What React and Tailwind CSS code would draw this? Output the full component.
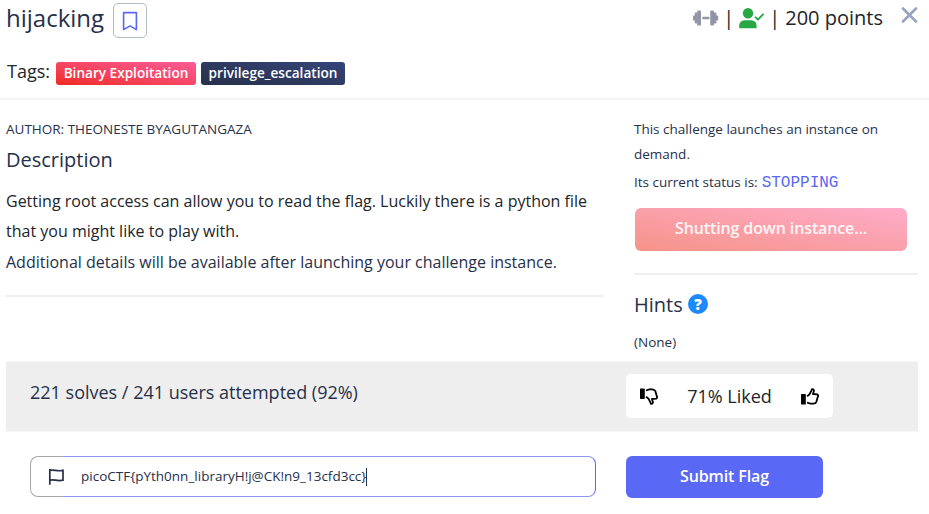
import React from "react";

const FONT = "font-['Open_Sans','Noto_Sans',sans-serif]";

function Dumbbell() {
  return (
    <svg width="26" height="16" viewBox="0 0 26 16" fill="#9295a5">
      <rect x="0" y="5.4" width="3" height="5.2" rx="0.8" />
      <rect x="1.8" y="2.4" width="3" height="11.2" rx="1" />
      <rect x="4.2" y="0.4" width="3.8" height="15.2" rx="1" />
      <rect x="9.4" y="6.7" width="7" height="2.6" rx="0.5" />
      <rect x="17.2" y="0.4" width="3.8" height="15.2" rx="1" />
      <rect x="20.4" y="2.4" width="3" height="11.2" rx="1" />
      <rect x="22.2" y="5.4" width="3" height="5.2" rx="0.8" />
    </svg>
  );
}

function UserCheck() {
  return (
    <svg width="26" height="21" viewBox="0 0 26 21">
      <g fill="#28a745">
        <circle cx="9" cy="5.2" r="5.2" />
        <path d="M0.2 20.2v-2.8a5.2 5.2 0 0 1 5.2-5.2h7a5.2 5.2 0 0 1 5.2 5.2v2.8z" />
      </g>
      <path d="M16 8.8l3 2.7 5.6-5.6" fill="none" stroke="#28a745" strokeWidth="1.8" />
    </svg>
  );
}

function Thumb({ className }) {
  return (
    <svg className={className} width="18" height="17" viewBox="0 0 18 17">
      <rect x="0" y="6" width="4.8" height="10.6" rx="0.7" fill="#000" />
      <path
        d="M6 8.4L8.6 6.2 10.4 2.6L11 1.1C12.8 1 13.2 2.4 12.7 3.6L11.9 6L16.2 6.3C17.2 7 17.3 8 16.8 8.8L15.4 13.8C14.8 15 13.8 15.6 12.4 15.7L9.4 15.6L6 14.5"
        fill="none"
        stroke="#000"
        strokeWidth="1.8"
        strokeLinejoin="round"
      />
    </svg>
  );
}

export default function App() {
  return (
    <div className={`${FONT} flex h-[514px] w-[929px] flex-col overflow-hidden bg-white text-[#27304a]`}>
      <header className="h-[100px] shrink-0 border-b-2 border-[#f3f3f3] px-1.5">
        <div className="flex h-[38px] items-start">
          <h1 className="w-[107px] text-[24px] leading-[36px] whitespace-nowrap">hijacking</h1>
          <button className="mt-[3px] flex h-[35px] w-[34px] items-center justify-center rounded-[5px] border border-[#b4bac1]">
            <svg width="16" height="20" viewBox="0 0 16 20" fill="none" stroke="#5a68f6" strokeWidth="1.6" strokeLinejoin="round">
              <path d="M1.6 1.6h12.8v17L8 14.9l-6.4 3.7z" />
            </svg>
          </button>
          <div className="ml-auto flex h-9 items-center text-[20px] text-[#212529]">
            <Dumbbell />
            <span className="ml-[4px]">|</span>
            <span className="ml-[5px]"><UserCheck /></span>
            <span className="ml-[4px]">|</span>
            <span className="ml-[5px] whitespace-nowrap">200 points</span>
          </div>
          <svg className="mt-[7px] mr-[5px] ml-[18px]" width="17" height="16" viewBox="0 0 17 16" stroke="#9aa3c0" strokeWidth="2.6" strokeLinecap="round">
            <path d="M2 1.5l13 13M15 1.5l-13 13" />
          </svg>
        </div>
        <div className="mt-[18px] flex items-center">
          <span className="w-[50px] pl-px text-[18px] leading-[30px] text-[#212529]">Tags:</span>
          <span className="mt-[4px] flex h-[23px] w-[140px] items-center justify-center rounded-[3px] bg-linear-to-tr from-[#ee281b] to-[#fc5a98] text-[13.6px] font-semibold whitespace-nowrap text-white">Binary Exploitation</span>
          <span className="mt-[4px] ml-[5px] flex h-[23px] w-[144px] items-center justify-center rounded-[3px] bg-linear-to-tr from-[#273049] to-[#35457a] text-[13.6px] font-semibold whitespace-nowrap text-white">privilege_escalation</span>
        </div>
      </header>

      <main className="flex h-[261px] shrink-0 pl-1.5">
        <section className="w-[598px]">
          <p className="mt-[19px] text-[13.5px] leading-5 whitespace-nowrap">AUTHOR: THEONESTE BYAGUTANGAZA</p>
          <h2 className="mt-[6px] text-[20px] leading-[30px]">Description</h2>
          <p className="mt-[11px] text-[16px] leading-[30px] whitespace-nowrap text-[#212529]">
            Getting root access can allow you to read the flag. Luckily there is a python file
            <br />
            that you might like to play with.
          </p>
          <p className="mt-px text-[16px] leading-[31px] whitespace-nowrap">Additional details will be available after launching your challenge instance.</p>
          <hr className="mt-[17px] border-t-2 border-[#efefef]" />
        </section>
        <aside className="ml-[30px] w-[284px]">
          <p className="mt-[17px] text-[13.5px] leading-[25px] whitespace-nowrap">
            This challenge launches an instance on
            <br />
            demand.
          </p>
          <p className="mt-[3px] flex h-[25px] items-center text-[13.5px] whitespace-nowrap">
            Its current status is:
            <code className="ml-[4px] font-['Liberation_Mono',monospace] text-[16px] text-[#5a68f6]">STOPPING</code>
          </p>
          <button className="mt-[13px] ml-[1px] block h-[43px] w-[272px] rounded-[6px] bg-linear-to-tr from-[#f69388] to-[#feacca] pb-[3px] text-[16px] font-semibold tracking-[-0.12px] text-white/90">Shutting down instance...</button>
          <hr className="mt-[22px] border-t-2 border-[#efefef]" />
          <div className="mt-[14px] flex h-[32px] items-center">
            <h2 className="w-[54px] text-[20px]">Hints</h2>
            <span className="mb-[2px] flex size-5 items-center justify-center rounded-full bg-[#1e88ff] text-[15px] leading-5 font-extrabold text-white">?</span>
          </div>
          <p className="mt-[9px] text-[13.5px] leading-6">(None)</p>
        </aside>
      </main>

      <section className="mr-[11px] ml-1.5 flex h-[71px] shrink-0 border-y border-[#f6f6f6] bg-[#eeeeee]">
        <p className="mt-[15px] ml-6 w-[596px] text-[18px] leading-[31px] whitespace-nowrap">221 solves / 241 users attempted (92%)</p>
        <div className="mt-[12px] flex h-[44px] w-[207px] items-center justify-between rounded-[5px] bg-white px-[14px] text-[18px] text-[#212529]">
          <Thumb className="-scale-y-100" />
          <span>71% Liked</span>
          <Thumb />
        </div>
      </section>

      <form className="flex px-[30px] pt-6" onSubmit={(event) => event.preventDefault()}>
        <div className="flex h-[41px] w-[566px]">
          <span className="flex w-[33px] items-center rounded-l-[8px] border border-r-0 border-[#a6a8b0] pl-[17px]">
            <svg className="shrink-0" width="17" height="18" viewBox="0 0 17 18" fill="none" stroke="#273049" strokeWidth="1.7">
              <path d="M1.8 1v15.8M1.8 2.4c4-1.4 7 1.4 13.2 0v9.8c-6.2 1.4-9.2-1.4-13.2 0" />
            </svg>
          </span>
          <div className="flex flex-1 items-center rounded-r-[8px] border border-l-0 border-[#8d96ef] border-r-[#5a68f6] pl-[18px]">
            <span className="text-[13.5px] whitespace-nowrap">picoCTF&#123;pYth0nn_libraryH!j@CK!n9_13cfd3cc&#125;</span>
            <span className="h-[18px] w-px bg-[#273049]" />
          </div>
        </div>
        <button className="ml-[30px] h-[42px] w-[197px] rounded-[6px] bg-[#5a68f6] pb-[2px] text-[16px] font-semibold tracking-[-0.12px] text-white">Submit Flag</button>
      </form>
    </div>
  );
}
